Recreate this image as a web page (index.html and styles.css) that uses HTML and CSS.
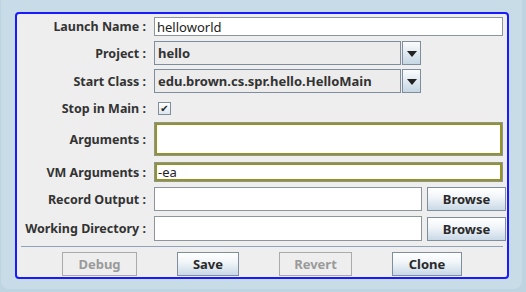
FILE: index.html
```html
<!DOCTYPE html>
<html>
<head>
<meta charset="utf-8">
<link rel="stylesheet" href="styles.css">
</head>
<body>
<div class="frame">
  <div class="panel">
    <div class="row r-name">
      <label class="lbl">Launch Name :</label>
      <div class="field text h19">helloworld</div>
    </div>
    <div class="row r-project">
      <label class="lbl">Project :</label>
      <div class="combo">
        <div class="combo-box">hello</div>
        <div class="combo-btn"><span class="tri"></span></div>
      </div>
    </div>
    <div class="row r-class">
      <label class="lbl">Start Class :</label>
      <div class="combo">
        <div class="combo-box">edu.brown.cs.spr.hello.HelloMain</div>
        <div class="combo-btn"><span class="tri"></span></div>
      </div>
    </div>
    <div class="row r-stop">
      <label class="lbl">Stop in Main :</label>
      <div class="check-wrap"><span class="check">&#x2714;</span></div>
    </div>
    <div class="row r-args">
      <label class="lbl">Arguments :</label>
      <div class="field area olive"></div>
    </div>
    <div class="row r-vm">
      <label class="lbl">VM Arguments :</label>
      <div class="field text olive h20">-ea</div>
    </div>
    <div class="row r-rec">
      <label class="lbl">Record Output :</label>
      <div class="with-btn">
        <div class="field text h24"></div>
        <button class="btn browse">Browse</button>
      </div>
    </div>
    <div class="row r-work">
      <label class="lbl">Working Directory :</label>
      <div class="with-btn">
        <div class="field text h25"></div>
        <button class="btn browse">Browse</button>
      </div>
    </div>
    <div class="sep"></div>
    <div class="actions">
      <button class="btn act disabled w-debug">Debug</button>
      <button class="btn act w-save">Save</button>
      <button class="btn act disabled w-revert">Revert</button>
      <button class="btn act w-clone">Clone</button>
    </div>
  </div>
</div>
</body>
</html>
```

FILE: styles.css
```css
html, body {
  margin: 0;
  padding: 0;
}
body {
  width: 526px;
  height: 292px;
  background: #bfd4e1;
  font-family: "Noto Sans", "DejaVu Sans", sans-serif;
  overflow: hidden;
}
.frame {
  box-sizing: border-box;
  width: 521px;
  height: 289px;
  margin: 0 0 0 1px;
  padding: 12px 0 0 14px;
  background: #c8dce8;
  border-radius: 0 0 8px 8px;
}
.panel {
  box-sizing: border-box;
  width: 494px;
  height: 267px;
  border: 2px solid #1a1aff;
  border-radius: 4px;
  background: #eeeeee;
  padding: 3px 4px 0 0;
  display: flex;
  flex-direction: column;
}
.row {
  display: grid;
  grid-template-columns: 129px 1fr;
  column-gap: 8px;
  align-items: center;
}
.r-project { margin-top: 5px; }
.r-class { margin-top: 4px; }
.r-stop { margin-top: 5px; height: 20px; }
.r-args { margin-top: 4px; }
.r-vm { margin-top: 6px; }
.r-rec { margin-top: 5px; }
.r-work { margin-top: 5px; }
.lbl {
  text-align: right;
  font-weight: bold;
  font-size: 12.5px;
  color: #333333;
  white-space: nowrap;
}
.field {
  box-sizing: border-box;
  background: #ffffff;
  border: 1px solid #8c949e;
  font-size: 13px;
  color: #222;
  padding: 0 2px;
  display: flex;
  align-items: center;
}
.h19 { height: 19px; }
.h20 { height: 20px; }
.h24 { height: 24px; }
.h25 { height: 25px; }
.area { height: 34px; }
.olive {
  border: 1px solid #8c949e;
  box-shadow: inset 0 0 0 2px #949426;
  padding-left: 3px;
}
.combo {
  display: flex;
  height: 24px;
  width: 267px;
}
.combo-box {
  box-sizing: border-box;
  flex: 1;
  border: 1px solid #7f8d9c;
  background: #ececec;
  font-weight: bold;
  font-size: 13px;
  color: #333;
  padding: 0 3px;
  display: flex;
  align-items: center;
}
.combo-btn {
  box-sizing: border-box;
  width: 19px;
  margin-left: 1px;
  border: 1px solid #7f8d9c;
  background: linear-gradient(#fafcfd, #c6d6e4);
  display: flex;
  align-items: center;
  justify-content: center;
}
.tri {
  width: 0;
  height: 0;
  border-left: 5px solid transparent;
  border-right: 5px solid transparent;
  border-top: 6px solid #222;
  margin-top: 1px;
}
.check-wrap {
  padding-left: 4px;
  display: flex;
  align-items: center;
}
.check {
  box-sizing: border-box;
  width: 13px;
  height: 13px;
  border: 1px solid #7f8d9c;
  background: linear-gradient(#ffffff, #dde6ee);
  font-family: "DejaVu Sans", sans-serif;
  font-size: 10px;
  line-height: 11px;
  text-align: center;
  color: #222;
}
.with-btn {
  display: flex;
  align-items: center;
}
.with-btn .field {
  width: 268px;
}
.btn {
  box-sizing: border-box;
  font-family: "Noto Sans", "DejaVu Sans", sans-serif;
  font-weight: bold;
  font-size: 13px;
  color: #2a2a2a;
  border: 1px solid #7f8d9c;
  background: linear-gradient(#ffffff, #f2f6f9 40%, #c9d9e7);
  padding: 0;
  margin: 0;
}
.browse {
  width: 79px;
  height: 24px;
  margin-left: 5px;
}
.sep {
  height: 1px;
  background: #8fa3bb;
  margin: 5px 0 0 4px;
}
.actions {
  display: flex;
  justify-content: center;
  gap: 40px;
  margin-top: 5px;
  padding-left: 4px;
}
.act { height: 24px; }
.disabled {
  background: #eeeeee;
  border-color: #aaaaaa;
  color: #9a9a9a;
}
.w-debug { width: 75px; }
.w-save { width: 62px; }
.w-revert { width: 73px; }
.w-clone { width: 70px; }
```
